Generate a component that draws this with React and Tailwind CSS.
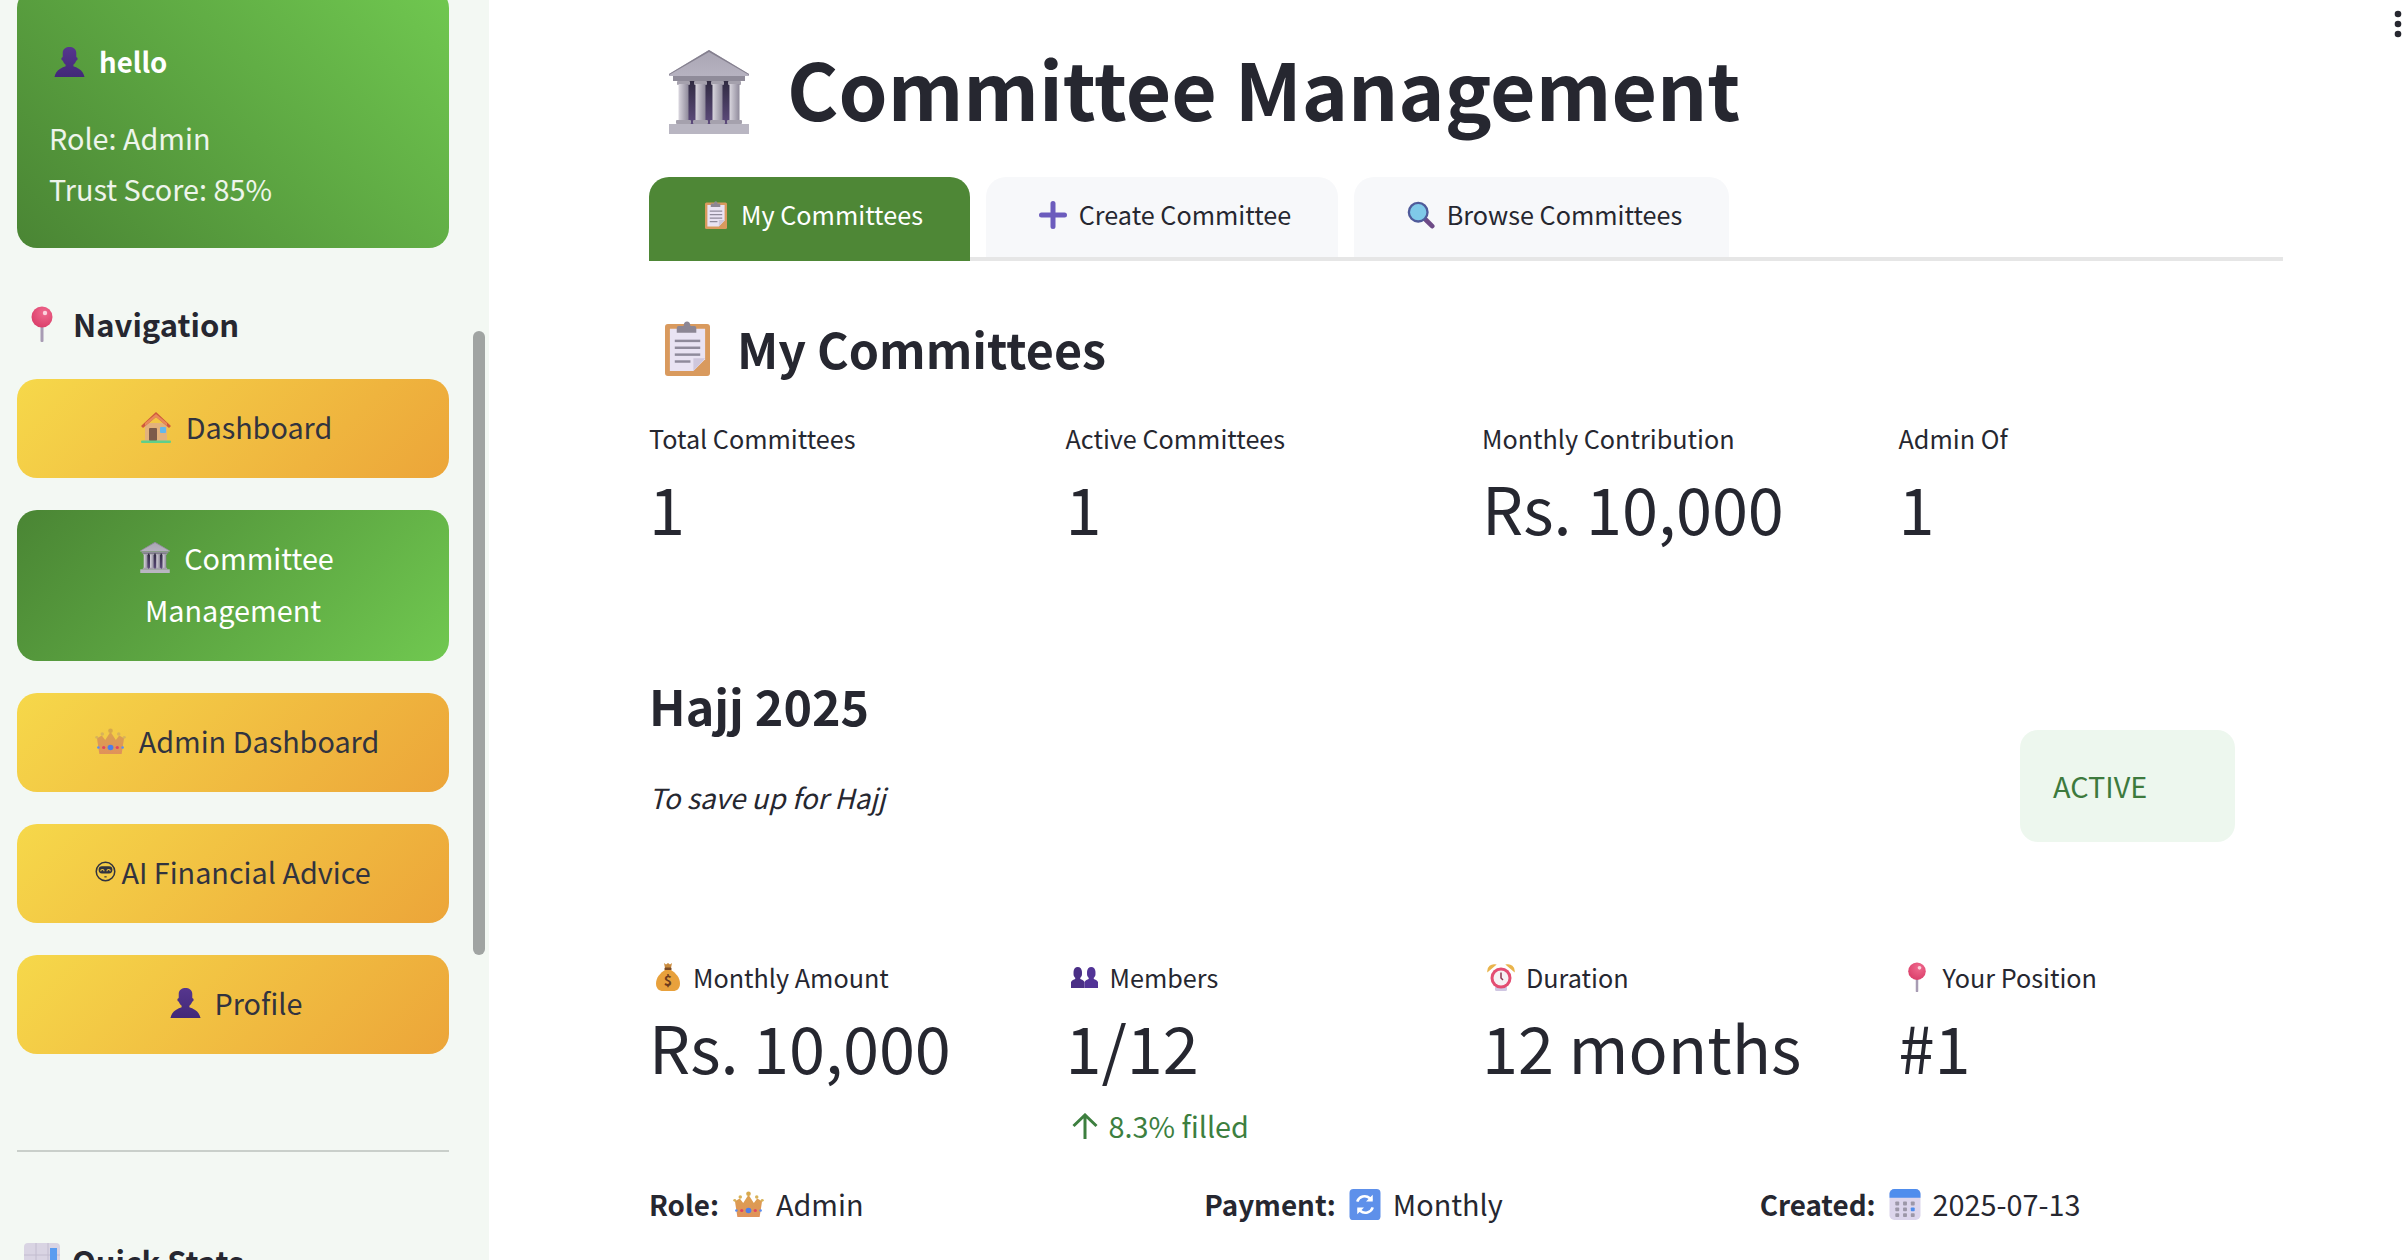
const font = { fontFamily: '"Noto Sans CJK SC", "Noto Sans", sans-serif' };

function BustIcon({ className }) {
  return (
    <svg viewBox="0 0 32 32" className={className}>
      <defs>
        <linearGradient id="bust" x1="0" y1="0" x2="0" y2="1">
          <stop offset="0" stopColor="#56368e" />
          <stop offset="1" stopColor="#422878" />
        </linearGradient>
      </defs>
      <path fill="url(#bust)" d="M9 7c0-4 3.500-6 7-6s7 2 7 6v4.500c.9 0 1.400.7 1.400 1.600S23.700 15 23 15c-.5 2-1.900 3.500-3 4.300V21c3 1 10 3.500 11.500 11H.5C2 24.500 9 22 12 21v-1.700c-1.100-.8-2.500-2.300-3-4.300-.7 0-1.400-.9-1.400-1.900S8.100 11.500 9 11.500V7z" />
    </svg>
  );
}

function BustsIcon({ className }) {
  return (
    <svg viewBox="0 0 32 26" preserveAspectRatio="none" className={className}>
      <path fill="#4a2f86" d="M3 6C3 2.500 5.200 0 8 0s5 2.500 5 6v3c0 2-1 3.500-2 4.300V15c2 .7 3.500 1.600 5 3.600V26H0v-7.400c1.500-2 3-2.900 5-3.600v-1.700C4 12.500 3 11 3 9V6z" />
      <path fill="#523497" d="M19 6c0-3.500 2.200-6 5-6s5 2.500 5 6v3c0 2-1 3.500-2 4.300V15c2 .7 3.500 1.600 5 3.600V26H16v-7.400c1.500-2 3-2.900 5-3.600v-1.700c-1-.8-2-2.300-2-4.300V6z" />
    </svg>
  );
}

function PinIcon({ className }) {
  return (
    <svg viewBox="0 0 22 36" className={className}>
      <defs>
        <radialGradient id="pinBall" cx="0.6" cy="0.3" r="0.8">
          <stop offset="0" stopColor="#f06a8e" />
          <stop offset="1" stopColor="#d83a66" />
        </radialGradient>
      </defs>
      <rect x="9.500" y="16" width="3" height="20" rx="1" fill="#a89cb4" />
      <circle cx="11" cy="11" r="10.500" fill="url(#pinBall)" />
      <circle cx="14" cy="7" r="2.200" fill="#fbd3dd" />
    </svg>
  );
}

function HouseIcon({ className }) {
  return (
    <svg viewBox="0 0 32 32" className={className}>
      <rect x="5" y="12" width="22" height="18" fill="#e3b27c" />
      <path fill="#cf5a3c" d="M16 1 31 15l-2 2L16 6 3 17l-2-2L16 1z" />
      <path fill="#e98a5a" d="M16 6 27 15v-3L16 3 5 12v3L16 6z" />
      <rect x="9" y="17" width="8" height="13" rx="1" fill="#7c5a4a" />
      <rect x="20" y="16" width="6" height="6" rx="1" fill="#63b8ec" />
      <rect x="1" y="29.500" width="30" height="2.500" rx="1" fill="#5fcf8a" />
    </svg>
  );
}

function BuildingIcon({ className }) {
  return (
    <svg viewBox="0 0 80 84" className={className}>
      <defs>
        <linearGradient id="bldBack" x1="0" y1="0" x2="0" y2="1">
          <stop offset="0" stopColor="#2f2a40" />
          <stop offset="1" stopColor="#5d4b7c" />
        </linearGradient>
        <linearGradient id="bldCol" x1="0" y1="0" x2="1" y2="0">
          <stop offset="0" stopColor="#d9d6de" />
          <stop offset="1" stopColor="#8f8a9b" />
        </linearGradient>
        <linearGradient id="bldRoof" x1="0" y1="0" x2="0" y2="1">
          <stop offset="0" stopColor="#a9a5b3" />
          <stop offset="1" stopColor="#b6b2c0" />
        </linearGradient>
      </defs>
      <rect x="10" y="30" width="60" height="44" fill="url(#bldBack)" />
      <path fill="url(#bldRoof)" d="M40 0 80 24v2H0v-2L40 0z" />
      <path fill="#85808f" d="M40 0 80 24v1L40 2 0 25v-1L40 0z" />
      <rect x="4" y="26" width="72" height="5" fill="#8f8b99" />
      {[8, 25, 42, 59].map((x) => (
        <g key={x}>
          <rect x={x} y="31" width="13" height="4" rx="1" fill="#a5a1ad" />
          <rect x={x + 1.500} y="34" width="10" height="38" fill="url(#bldCol)" />
          <rect x={x - 1} y="70" width="15" height="4" rx="1" fill="#a5a1ad" />
        </g>
      ))}
      <rect x="0" y="74" width="80" height="10" fill="#b9b6c2" />
    </svg>
  );
}

function CrownIcon({ className }) {
  return (
    <svg viewBox="0 0 32 28" preserveAspectRatio="none" className={className}>
      <defs>
        <linearGradient id="crown" x1="0" y1="0" x2="0" y2="1">
          <stop offset="0" stopColor="#dba04f" />
          <stop offset="1" stopColor="#e0925a" />
        </linearGradient>
      </defs>
      <path fill="url(#crown)" d="M16 4 21.500 13 25 8 30 11 27.500 28H4.500L2 11 7 8 10.500 13 16 4z" />
      <circle cx="16" cy="3" r="2.400" fill="#d8a94c" />
      <circle cx="7.500" cy="6.500" r="1.800" fill="#d8b35a" />
      <circle cx="24.500" cy="6.500" r="1.800" fill="#d8b35a" />
      <circle cx="1.800" cy="10" r="1.500" fill="#d8b35a" />
      <circle cx="30.200" cy="10" r="1.500" fill="#d8b35a" />
      <circle cx="16" cy="21" r="3" fill="#4d7ee8" />
      <circle cx="9" cy="21" r="1.700" fill="#e2445f" />
      <circle cx="23" cy="21" r="1.700" fill="#e2445f" />
      <circle cx="3.500" cy="21" r="1.300" fill="#5b8df0" />
      <circle cx="28.500" cy="21" r="1.300" fill="#5b8df0" />
    </svg>
  );
}

function RobotGlyph({ className }) {
  return (
    <svg viewBox="0 0 22 22" className={className}>
      <circle cx="11" cy="11" r="9.700" fill="none" stroke="#31333f" strokeWidth="1.600" />
      <rect x="3.800" y="5.500" width="14.400" height="7.500" rx="3.500" fill="#31333f" />
      <path d="M6 10.800c0-2.500 3.500-2.500 3.500 0M12.500 10.800c0-2.500 3.500-2.500 3.500 0" fill="none" stroke="#f0c443" strokeWidth="1.200" />
      <rect x="9.800" y="16" width="2.400" height="1.200" fill="#31333f" />
    </svg>
  );
}

function ClipboardIcon({ className }) {
  return (
    <svg viewBox="0 0 46 56" preserveAspectRatio="none" className={className}>
      <rect x="0" y="3" width="46" height="53" rx="3" fill="#d99a5e" />
      <path fill="#e9e3f3" d="M5 8h36v31L29 51H5V8z" />
      <path fill="#cfc7dd" d="M41 38 29 51V38h12z" />
      <path fill="#8c8694" d="M15 5h5c0-6 7-6 7 0h4a2 2 0 0 1 2 2v5H13V7a2 2 0 0 1 2-2z" transform="translate(-1 0)" />
      <g fill="#8f8a9b">
        <rect x="10" y="19" width="26" height="2.500" />
        <rect x="10" y="26" width="26" height="2.500" />
        <rect x="10" y="33" width="26" height="2.500" />
        <rect x="10" y="40" width="16" height="2.500" />
      </g>
    </svg>
  );
}

function PlusIcon({ className }) {
  return (
    <svg viewBox="0 0 28 28" className={className}>
      <path fill="#6c5cbd" d="M11.500 2.500a2.500 2.500 0 0 1 5 0v9h9a2.500 2.500 0 0 1 0 5h-9v9a2.500 2.500 0 0 1-5 0v-9h-9a2.500 2.500 0 0 1 0-5h9v-9z" />
    </svg>
  );
}

function SearchIcon({ className }) {
  return (
    <svg viewBox="0 0 30 30" className={className}>
      <path d="M19 19 27 27" stroke="#6d4a86" strokeWidth="5" strokeLinecap="round" />
      <circle cx="12" cy="12" r="10" fill="#7fc9e8" stroke="#4f5b9a" strokeWidth="2.500" />
    </svg>
  );
}

function MoneyBagIcon({ className }) {
  return (
    <svg viewBox="0 0 24 28" className={className}>
      <path fill="#c98a3c" d="M8 0l2 1.500L12 0l2 1.500L16 0l-1 5H9L8 0z" />
      <rect x="8.500" y="4.500" width="7" height="3" rx="1" fill="#7a4a25" />
      <path fill="#e8a13c" d="M9 7h6c5 3 9 8 9 13.500 0 5-3 7.500-7 7.500H7c-4 0-7-2.500-7-7.500C0 15 4 10 9 7z" />
      <text x="12" y="23" textAnchor="middle" fontSize="14" fontWeight="700" fill="#6d3c1e" style={font}>$</text>
    </svg>
  );
}

function AlarmIcon({ className }) {
  return (
    <svg viewBox="0 0 28 28" className={className}>
      <path fill="#e9b44c" d="M1 8a6 6 0 0 1 7-6L1 8zM27 8a6 6 0 0 0-7-6l7 6z" stroke="#e9b44c" strokeWidth="1.500" />
      <rect x="8" y="23" width="12" height="5" rx="1.500" fill="#cfc6e2" />
      <circle cx="14" cy="15" r="10.500" fill="#e34d72" />
      <circle cx="14" cy="15" r="7.500" fill="#f6f1f4" />
      <path d="M14 9.500V15l2 2" stroke="#8a3850" strokeWidth="1.500" fill="none" />
    </svg>
  );
}

function RepeatIcon({ className }) {
  return (
    <svg viewBox="0 0 32 32" className={className}>
      <rect width="32" height="32" rx="4" fill="#5e90ea" />
      <path d="M8 13a8 8 0 0 1 13-3.500l2 2" fill="none" stroke="#fff" strokeWidth="2.600" />
      <path d="M24 6v7h-7z" fill="#fff" />
      <path d="M24 19a8 8 0 0 1-13 3.500l-2-2" fill="none" stroke="#fff" strokeWidth="2.600" />
      <path d="M8 26v-7h7z" fill="#fff" />
    </svg>
  );
}

function CalendarIcon({ className }) {
  return (
    <svg viewBox="0 0 32 32" className={className}>
      <rect width="32" height="32" rx="5" fill="#dcd5ec" />
      <path fill="#4f8ded" d="M0 9V5a5 5 0 0 1 5-5h22a5 5 0 0 1 5 5v4H0z" />
      {[6, 14, 22].map((x) =>
        [13, 19, 25].map((y) => (
          <rect key={`${x}-${y}`} x={x} y={y} width="4" height="4" rx="0.800" fill={x === 22 && y === 19 ? '#4f8ded' : '#9c97a8'} />
        )),
      )}
    </svg>
  );
}

function BarChartIcon({ className }) {
  return (
    <svg viewBox="0 0 36 36" className={className}>
      <rect width="36" height="36" rx="4" fill="#d9d4e3" />
      <path d="M12 0v36M24 0v36M0 12h36M0 24h36" stroke="#c2bccf" strokeWidth="1" />
      <rect x="3" y="17" width="7" height="19" fill="#a6d85f" />
      <rect x="14" y="24" width="7" height="12" fill="#e3548a" />
      <rect x="26" y="5" width="7" height="31" fill="#5a9cf0" />
    </svg>
  );
}

function NavButton({ active, children }) {
  const tone = active
    ? 'bg-[linear-gradient(135deg,#4a8534,#70c850)] text-white h-[151px]'
    : 'bg-[linear-gradient(135deg,#f6d84a,#eca539)] text-[#31333f] h-[99px]';
  return (
    <div className={`${tone} flex flex-col items-center justify-center rounded-[20px] pb-1 text-[28.8px] leading-[52px]`}>
      {children}
    </div>
  );
}

function Metric({ icon, label, value, delta }) {
  return (
    <div>
      <div className="flex h-10 items-center text-[25.2px] leading-10">
        {icon}
        {label}
      </div>
      <div className="mt-[9px] h-20 text-[64.8px] leading-20 whitespace-nowrap">{value}</div>
      {delta}
    </div>
  );
}

export default function App() {
  return (
    <div style={font} className="relative flex h-[1260px] overflow-hidden bg-white text-[#262730]">
      <aside className="relative h-full w-[489px] shrink-0 overflow-hidden bg-[#f3f8f3] pl-[17px] pr-10">
        <div className="-mt-3 h-[260px] rounded-[20px] bg-[linear-gradient(45deg,#4a8534,#70c850)] pl-8 pt-[49px] text-white">
          <div className="flex h-12 items-center text-[27.6px] font-bold leading-[48px]">
            <BustIcon className="ml-[5px] mr-[14px] h-[31px] w-[31px]" />
            hello
          </div>
          <p className="mt-[27px] text-[28.8px] leading-[51px] text-white/90">Role: Admin</p>
          <p className="text-[28.8px] leading-[51px] text-white/90">Trust Score: 85%</p>
        </div>

        <h3 className="mt-[52px] flex h-12 items-center text-[31px] font-semibold leading-[48px]">
          <PinIcon className="ml-[14px] mr-5 h-[36px] w-[22px]" />
          Navigation
        </h3>

        <nav className="mt-[31px] flex flex-col gap-8">
          <NavButton>
            <span className="flex items-center pl-[6px]">
              <HouseIcon className="mr-[14px] h-[32px] w-[32px]" />
              Dashboard
            </span>
          </NavButton>
          <NavButton active>
            <span className="flex items-center pl-2">
              <BuildingIcon className="mr-[14px] h-[31px] w-[30px]" />
              Committee
            </span>
            <span>Management</span>
          </NavButton>
          <NavButton>
            <span className="flex items-center pl-2">
              <CrownIcon className="mr-[13px] h-[26px] w-[31px]" />
              Admin Dashboard
            </span>
          </NavButton>
          <NavButton>
            <span className="flex items-center">
              <RobotGlyph className="mr-[5px] h-[21px] w-[21px]" />
              AI Financial Advice
            </span>
          </NavButton>
          <NavButton>
            <span className="flex items-center pl-[6px]">
              <BustIcon className="mr-[14px] h-[31px] w-[31px]" />
              Profile
            </span>
          </NavButton>
        </nav>

        <hr className="mt-[96px] border-t-2 border-[#c9cfca]" />

        <h3 className="mt-[85px] flex h-12 items-center text-[31px] font-semibold leading-[48px]">
          <BarChartIcon className="ml-[7px] mr-3 h-[36px] w-[36px]" />
          Quick Stats
        </h3>

        {/* overlay scrollbar */}
        <div className="absolute right-1 top-[331px] h-[624px] w-3 rounded-md bg-[#a0a4a2]" />
      </aside>

      <main className="min-w-0 flex-1 pl-[160px] pr-[122px] pt-[22px]">
        <h1 className="flex h-[130px] items-center text-[78.5px] font-bold leading-[130px]">
          <BuildingIcon className="ml-5 mr-[38px] mt-[10px] h-[84px] w-[80px]" />
          Committee Management
        </h1>

        <div className="mt-[25px] flex h-[84px] gap-4 border-b-4 border-[#e6e6e6] text-[25.2px]">
          <div className="-mb-1 flex h-[84px] w-[321px] items-center justify-center rounded-t-[20px] bg-[#4e8736] pb-2 pl-[9px] text-white">
            <ClipboardIcon className="mr-[14px] h-7 w-[22px]" />
            My Committees
          </div>
          <div className="flex h-20 w-[352px] items-center justify-center rounded-t-[20px] bg-[#f7f8fa] pb-1 pl-[6px]">
            <PlusIcon className="mr-3 h-7 w-7" />
            Create Committee
          </div>
          <div className="flex h-20 w-[375px] items-center justify-center rounded-t-[20px] bg-[#f7f8fa] pb-1 pl-[6px]">
            <SearchIcon className="mr-3 h-7 w-7" />
            Browse Committees
          </div>
        </div>

        <h2 className="mt-[57px] flex h-[60px] items-center text-[48.4px] font-semibold leading-[60px]">
          <ClipboardIcon className="ml-4 mr-[27px] h-[55px] w-[45px]" />
          My Committees
        </h2>

        <div className="mt-10 grid grid-cols-4 gap-8">
          <Metric label="Total Committees" value="1" />
          <Metric label="Active Committees" value="1" />
          <Metric label="Monthly Contribution" value="Rs. 10,000" />
          <Metric label="Admin Of" value="1" />
        </div>

        <div className="mt-[123px] flex items-start justify-between">
          <div>
            <h3 className="h-[70px] text-[48.4px] font-semibold leading-[70px]">Hajj 2025</h3>
            <p className="mt-8 h-[50px] text-[27.8px] italic leading-[50px]">To save up for Hajj</p>
          </div>
          <div className="mr-12 mt-[60px] flex h-[112px] w-[215px] items-center rounded-[18px] bg-[#edf7ee] pl-[33px] text-[28.8px] text-[#3d7a3d]">
            ACTIVE
          </div>
        </div>

        <div className="mt-[115px] grid grid-cols-4 gap-8">
          <Metric icon={<MoneyBagIcon className="ml-[7px] mr-[13px] h-[28px] w-[24px]" />} label="Monthly Amount" value="Rs. 10,000" />
          <Metric
            icon={<BustsIcon className="ml-[5px] mr-[12px] h-[21px] w-[27px]" />}
            label="Members"
            value="1/12"
            delta={
              <div className="mt-5 flex h-10 items-center text-[28.8px] text-[#3d7f3f]">
                <svg viewBox="0 0 26 26" className="ml-[6px] mr-[11px] h-[26px] w-[26px]" fill="none" stroke="#3d7f3f" strokeWidth="3">
                  <path d="M13 26V2M1.500 13 13 2l11.500 11" />
                </svg>
                8.3% filled
              </div>
            }
          />
          <Metric icon={<AlarmIcon className="ml-[5px] mr-[11px] h-[28px] w-[28px]" />} label="Duration" value="12 months" />
          <Metric icon={<PinIcon className="ml-2 mr-[16px] h-[30px] w-[20px]" />} label="Your Position" value="#1" />
        </div>

        <div className="mt-[38px] grid grid-cols-3 gap-8 text-[28.8px] leading-10">
          <div className="flex items-center">
            <b className="text-[27.8px] font-semibold">Role:</b>
            <CrownIcon className="ml-[14px] mr-3 h-[26px] w-[31px]" />
            Admin
          </div>
          <div className="flex items-center">
            <b className="text-[27.8px] font-semibold">Payment:</b>
            <RepeatIcon className="ml-[13px] mr-3 h-[31px] w-8" />
            Monthly
          </div>
          <div className="flex items-center">
            <b className="text-[27.8px] font-semibold">Created:</b>
            <CalendarIcon className="ml-[13px] mr-3 h-[31px] w-8" />
            2025-07-13
          </div>
        </div>
      </main>

      <svg viewBox="0 0 10 30" className="absolute right-0.5 top-[9px] h-[30px] w-2.5" fill="#262730">
        <circle cx="5" cy="5" r="3.300" />
        <circle cx="5" cy="15" r="3.300" />
        <circle cx="5" cy="25" r="3.300" />
      </svg>
    </div>
  );
}
